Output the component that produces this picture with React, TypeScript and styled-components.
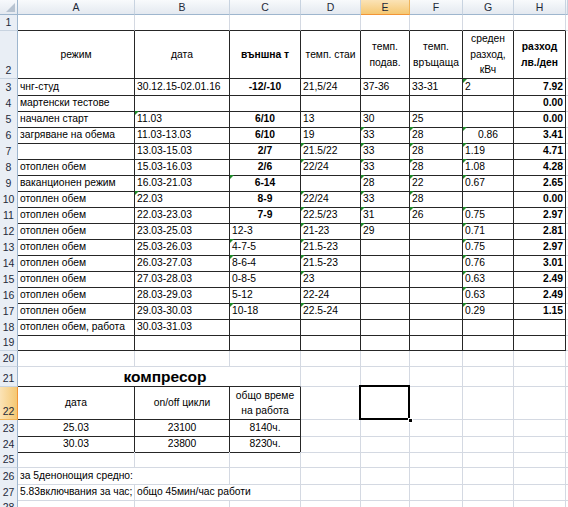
import React from 'react';
import styled, { createGlobalStyle, css } from 'styled-components';

const COLS = '18px 117px 95px 71px 60px 49px 53px 51px 52px 1fr';
const GRID = '#d4d9e2';
const DARK = '#262626';

const Global = createGlobalStyle`
  html, body { margin: 0; padding: 0; background: #fff; }
  body { font-family: 'Liberation Sans', Arial, sans-serif; font-size: 10.3px; color: #000; }
`;

const Sheet = styled.div`
  width: 568px;
  height: 507px;
  overflow: hidden;
  background: #fff;
`;

const Row = styled.div<{ $h: number }>`
  display: grid;
  grid-template-columns: ${COLS};
  height: ${(p) => p.$h}px;
`;

const Corner = styled.div`
  box-sizing: border-box;
  background: linear-gradient(#f7f9fc, #e4e9f0);
  border-right: 1px solid #9eb6ce;
  border-bottom: 1px solid #9eb6ce;
  display: flex;
  justify-content: flex-end;
  align-items: flex-end;
  padding: 0 2px 2px 0;
`;

const ColHead = styled.div<{ $sel?: boolean }>`
  box-sizing: border-box;
  background: ${(p) => (p.$sel ? 'linear-gradient(#fbe3b6, #f5c873)' : 'linear-gradient(#f8fafc, #e4e9f0)')};
  border-right: 1px solid ${(p) => (p.$sel ? '#f0b45a' : '#c8d3e0')};
  border-bottom: 1px solid ${(p) => (p.$sel ? '#f29536' : '#9eb6ce')};
  display: flex;
  align-items: center;
  justify-content: center;
  font-size: 10.5px;
  color: #1e2a3a;
`;

const RowHead = styled.div<{ $sel?: boolean }>`
  box-sizing: border-box;
  background: ${(p) => (p.$sel ? 'linear-gradient(90deg, #fbe3b6, #f5c873)' : '#e9eef5')};
  border-right: 1px solid ${(p) => (p.$sel ? '#f29536' : '#9eb6ce')};
  border-bottom: 1px solid ${(p) => (p.$sel ? '#f0b45a' : '#c8d3e0')};
  display: flex;
  align-items: flex-end;
  justify-content: center;
  padding-bottom: 1px;
  font-size: 10.5px;
  color: #1e2a3a;
  line-height: 13px;
`;

type Align = 'l' | 'c' | 'r';

const Cell = styled.div<{
  $span: number;
  $align: Align;
  $bold?: boolean;
  $br: string;
  $bb: string;
  $size?: number;
  $indent?: number;
  $sel?: boolean;
}>`
  grid-column: span ${(p) => p.$span};
  box-sizing: border-box;
  position: relative;
  min-width: 0;
  border-right: 1px solid ${(p) => p.$br};
  border-bottom: 1px solid ${(p) => p.$bb};
  display: flex;
  align-items: center;
  justify-content: ${(p) => (p.$align === 'l' ? 'flex-start' : p.$align === 'c' ? 'center' : 'flex-end')};
  text-align: ${(p) => (p.$align === 'l' ? 'left' : p.$align === 'c' ? 'center' : 'right')};
  padding: 0 2px 0 ${(p) => 2 + (p.$indent ?? 0)}px;
  font-weight: ${(p) => (p.$bold ? 700 : 400)};
  font-size: ${(p) => (p.$size ? `${p.$size}px` : 'inherit')};
  white-space: pre;
  line-height: 15.5px;
  ${(p) =>
    p.$sel &&
    css`
      z-index: 2;
      &::after {
        content: '';
        position: absolute;
        top: -2px;
        left: -2px;
        right: -1px;
        bottom: -1px;
        border: 2px solid #000;
      }
      &::before {
        content: '';
        position: absolute;
        right: -4px;
        bottom: -4px;
        width: 5px;
        height: 5px;
        background: #000;
        border: 1px solid #fff;
        box-sizing: border-box;
        z-index: 3;
      }
    `}
`;

const Tri = styled.span`
  position: absolute;
  top: 0;
  left: 0;
  width: 0;
  height: 0;
  border-top: 4px solid #1f8a2a;
  border-right: 4px solid transparent;
`;

type Spec = { v?: string; a?: Align; b?: boolean; t?: boolean; span?: number; size?: number; indent?: number };
type RowDef = { n: number; h: number; cells: Record<number, Spec> };

const L = (v: string, t = false): Spec => ({ v, a: 'l', t });
const CB = (v: string, t = false): Spec => ({ v, a: 'c', b: true, t });
const HR = (v: string): Spec => ({ v, a: 'r', b: true });
const C = (v: string, t = false): Spec => ({ v, a: 'c', t });

const rows: RowDef[] = [
  { n: 1, h: 16, cells: {} },
  {
    n: 2,
    h: 48,
    cells: {
      1: C('режим'),
      2: C('дата'),
      3: CB('външна т'),
      4: C('темп. стаи'),
      5: C('темп.\nподав.'),
      6: C('темп.\nвръщаща'),
      7: C('среден\nразход,\nкВч'),
      8: CB('разход\nлв./ден'),
    },
  },
  { n: 3, h: 16, cells: { 1: L('чнг-студ'), 2: L('30.12.15-02.01.16'), 3: CB('-12/-10'), 4: L('21,5/24'), 5: L('37-36'), 6: L('33-31'), 7: L('2', true), 8: HR('7.92') } },
  { n: 4, h: 16, cells: { 1: L('мартенски тестове'), 8: HR('0.00') } },
  { n: 5, h: 16, cells: { 1: L('начален старт'), 2: L('11.03', true), 3: CB('6/10'), 4: L('13'), 5: L('30'), 6: L('25'), 8: HR('0.00') } },
  { n: 6, h: 16, cells: { 1: L('загряване на обема'), 2: L('11.03-13.03'), 3: CB('6/10'), 4: L('19'), 5: L('33', true), 6: L('28', true), 7: C('0.86', true), 8: HR('3.41') } },
  { n: 7, h: 16, cells: { 2: L('13.03-15.03'), 3: CB('2/7'), 4: L('21.5/22', true), 5: L('33', true), 6: L('28', true), 7: L('1.19', true), 8: HR('4.71') } },
  { n: 8, h: 16, cells: { 1: L('отоплен обем'), 2: L('15.03-16.03'), 3: CB('2/6'), 4: L('22/24', true), 5: L('33', true), 6: L('28', true), 7: L('1.08', true), 8: HR('4.28') } },
  { n: 9, h: 16, cells: { 1: L('ваканционен режим'), 2: L('16.03-21.03'), 3: CB('6-14', true), 5: L('28', true), 6: L('22', true), 7: L('0.67', true), 8: HR('2.65') } },
  { n: 10, h: 16, cells: { 1: L('отоплен обем'), 2: L('22.03', true), 3: CB('8-9'), 4: L('22/24', true), 5: L('33', true), 6: L('28', true), 8: HR('0.00') } },
  { n: 11, h: 16, cells: { 1: L('отоплен обем'), 2: L('22.03-23.03'), 3: CB('7-9'), 4: L('22.5/23', true), 5: L('31', true), 6: L('26', true), 7: L('0.75', true), 8: HR('2.97') } },
  { n: 12, h: 16, cells: { 1: L('отоплен обем'), 2: L('23.03-25.03'), 3: L('12-3'), 4: L('21-23', true), 5: L('29', true), 7: L('0.71', true), 8: HR('2.81') } },
  { n: 13, h: 16, cells: { 1: L('отоплен обем'), 2: L('25.03-26.03'), 3: L('4-7-5', true), 4: L('21.5-23', true), 7: L('0.75', true), 8: HR('2.97') } },
  { n: 14, h: 16, cells: { 1: L('отоплен обем'), 2: L('26.03-27.03'), 3: L('8-6-4', true), 4: L('21.5-23', true), 7: L('0.76', true), 8: HR('3.01') } },
  { n: 15, h: 16, cells: { 1: L('отоплен обем'), 2: L('27.03-28.03'), 3: L('0-8-5'), 4: L('23', true), 7: L('0.63', true), 8: HR('2.49') } },
  { n: 16, h: 16, cells: { 1: L('отоплен обем'), 2: L('28.03-29.03'), 3: L('5-12'), 4: L('22-24'), 7: L('0.63', true), 8: HR('2.49') } },
  { n: 17, h: 16, cells: { 1: L('отоплен обем'), 2: L('29.03-30.03'), 3: L('10-18', true), 4: L('22.5-24', true), 7: L('0.29', true), 8: HR('1.15') } },
  { n: 18, h: 16, cells: { 1: L('отоплен обем, работа'), 2: L('30.03-31.03') } },
  { n: 19, h: 16, cells: {} },
  { n: 20, h: 16, cells: {} },
  { n: 21, h: 20, cells: { 1: { v: 'компресор', a: 'c', b: true, span: 3, size: 15.5, indent: 12 } } },
  { n: 22, h: 33, cells: { 1: C('дата'), 2: C('on/off цикли'), 3: C('общо време\nна работа') } },
  { n: 23, h: 16, cells: { 1: C('25.03'), 2: C('23100'), 3: C('8140ч.') } },
  { n: 24, h: 16, cells: { 1: C('30.03'), 2: C('23800'), 3: C('8230ч.') } },
  { n: 25, h: 16, cells: {} },
  { n: 26, h: 16, cells: { 1: { v: 'за 5денонощия средно:', a: 'l', span: 2 } } },
  { n: 27, h: 16, cells: { 1: L('5.83включвания за час;'), 2: { v: 'общо 45мин/час работи', a: 'l', span: 2 } } },
  { n: 28, h: 16, cells: {} },
];

const LETTERS = ['A', 'B', 'C', 'D', 'E', 'F', 'G', 'H'];
const SEL = { r: 22, c: 5 };

const inTable = (r: number, c: number) =>
  (r >= 2 && r <= 19 && c >= 1 && c <= 8) || (r >= 22 && r <= 24 && c >= 1 && c <= 3);

const SheetRow: React.FC<{ def: RowDef }> = ({ def }) => {
  const out: React.ReactNode[] = [];
  let c = 1;
  while (c <= 9) {
    const spec: Spec = def.cells[c] ?? {};
    const span = spec.span ?? 1;
    const end = c + span - 1;
    let anyIn = false;
    let anyBelow = false;
    for (let k = c; k <= end; k++) {
      if (inTable(def.n, k)) anyIn = true;
      if (inTable(def.n + 1, k)) anyBelow = true;
    }
    const br = c === 9 ? 'transparent' : inTable(def.n, end) || inTable(def.n, end + 1) ? DARK : GRID;
    const bb = anyIn || anyBelow ? DARK : GRID;
    out.push(
      <Cell
        key={c}
        $span={span}
        $align={spec.a ?? 'l'}
        $bold={spec.b}
        $size={spec.size}
        $indent={spec.indent}
        $br={br}
        $bb={bb}
        $sel={def.n === SEL.r && c === SEL.c}
      >
        {spec.t && <Tri />}
        {spec.v}
      </Cell>
    );
    c = end + 1;
  }
  return (
    <Row $h={def.h}>
      <RowHead $sel={def.n === SEL.r}>{def.n}</RowHead>
      {out}
    </Row>
  );
};

export default function App() {
  return (
    <Sheet>
      <Global />
      <Row $h={15}>
        <Corner>
          <svg width="9" height="9" viewBox="0 0 9 9">
            <polygon points="9,0 9,9 0,9" fill="#b7c3d1" />
          </svg>
        </Corner>
        {LETTERS.map((l, i) => (
          <ColHead key={l} $sel={i + 1 === SEL.c}>
            {l}
          </ColHead>
        ))}
        <ColHead />
      </Row>
      {rows.map((r) => (
        <SheetRow key={r.n} def={r} />
      ))}
    </Sheet>
  );
}
